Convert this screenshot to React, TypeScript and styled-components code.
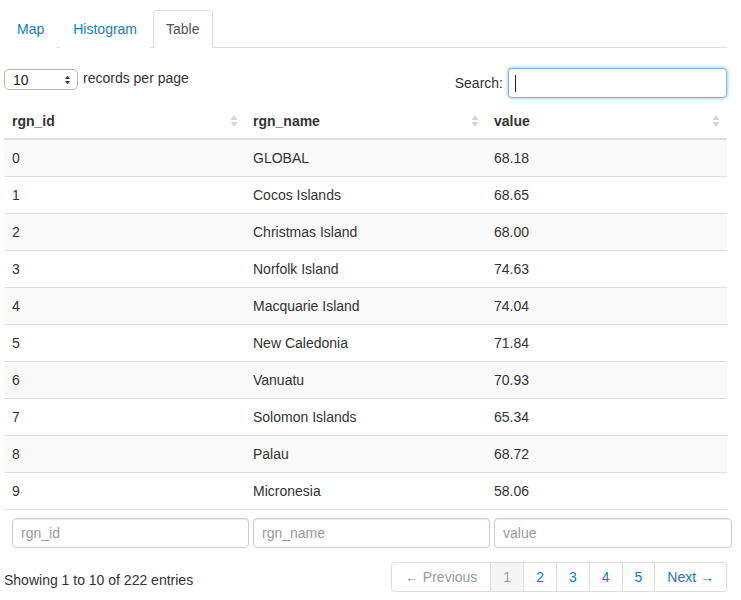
import React from "react";
import styled, { createGlobalStyle } from "styled-components";

const GlobalStyle = createGlobalStyle`
  html, body { margin: 0; padding: 0; background: #fff; }
  body {
    font-family: "Liberation Sans", Helvetica, Arial, sans-serif;
    font-size: 14px;
    line-height: 20px;
    color: #333;
  }
  * { box-sizing: border-box; }
`;

const Page = styled.div`
  width: 723px;
  margin-left: 4px;
  padding-top: 10px;
`;

const Tabs = styled.ul`
  display: flex;
  list-style: none;
  margin: 0 0 20px 0;
  padding: 0;
  border-bottom: 1px solid #ddd;
`;

const Tab = styled.li<{ $active?: boolean }>`
  margin: 0 3px -1px 0;
  padding: 8px 12px;
  line-height: 20px;
  border: 1px solid ${(p) => (p.$active ? "#ddd" : "transparent")};
  border-bottom-color: ${(p) => (p.$active ? "#fff" : "transparent")};
  border-radius: 4px 4px 0 0;
  background: #fff;
  color: ${(p) => (p.$active ? "#555" : "#0a7fcc")};
  cursor: pointer;
`;

const Controls = styled.div`
  display: flex;
  justify-content: space-between;
  align-items: flex-start;
  margin-bottom: 4px;
`;

const LengthGroup = styled.div`
  display: flex;
  align-items: flex-start;
  gap: 5px;
`;

const FakeSelect = styled.div`
  display: flex;
  align-items: center;
  justify-content: space-between;
  width: 74px;
  height: 21px;
  margin-top: 1px;
  padding: 0 6px 0 8px;
  border: 1px solid #b5b5b5;
  border-radius: 5px;
  background: #fff;
  font-size: 14px;
  color: #222;
`;

const SearchGroup = styled.div`
  display: flex;
  align-items: center;
  gap: 5px;
`;

const SearchBox = styled.div`
  display: flex;
  align-items: center;
  width: 219px;
  height: 30px;
  padding: 0 6px;
  border: 1px solid #7fb4e8;
  border-radius: 4px;
  box-shadow: 0 0 3px 1px rgba(110, 170, 235, 0.55);
  background: #fff;
`;

const Caret = styled.span`
  width: 1px;
  height: 17px;
  background: #222;
`;

const Table = styled.table`
  width: 100%;
  border-collapse: collapse;
  table-layout: fixed;
`;

const Th = styled.th`
  padding: 9px 7px 7px 8px;
  text-align: left;
  font-weight: bold;
  border-bottom: 2px solid #ddd;
  line-height: 20px;
`;

const HeadInner = styled.div`
  display: flex;
  align-items: center;
  justify-content: space-between;
`;

const Row = styled.tr<{ $striped: boolean }>`
  background: ${(p) => (p.$striped ? "#f9f9f9" : "#fff")};
`;

const Td = styled.td`
  padding: 8px;
  line-height: 20px;
  border-bottom: 1px solid #ddd;
`;

const FilterRow = styled.div`
  display: grid;
  grid-template-columns: 237px 237px 238px;
  column-gap: 4px;
  padding: 8px 0 8px 8px;
  width: 732px;
`;

const FilterInput = styled.input`
  height: 30px;
  width: 100%;
  padding: 4px 8px;
  font-family: inherit;
  font-size: 14px;
  color: #555;
  border: 1px solid #ccc;
  border-radius: 4px;
  box-shadow: inset 0 1px 1px rgba(0, 0, 0, 0.075);
  outline: none;
  &::placeholder { color: #999; }
`;

const Bottom = styled.div`
  display: flex;
  justify-content: space-between;
  align-items: flex-start;
  margin-top: 6px;
`;

const Info = styled.div`
  padding-top: 8px;
`;

const Pagination = styled.ul`
  display: flex;
  list-style: none;
  margin: 0;
  padding: 0;
  border-radius: 4px;
  box-shadow: 0 1px 2px rgba(0, 0, 0, 0.05);
`;

const PageItem = styled.li<{ $active?: boolean; $disabled?: boolean }>`
  padding: 4px 12px;
  line-height: 20px;
  border: 1px solid #ddd;
  border-left-width: 0;
  background: ${(p) => (p.$active ? "#f5f5f5" : "#fff")};
  color: ${(p) => (p.$active || p.$disabled ? "#999" : "#0a7fcc")};
  &:first-child {
    border-left-width: 1px;
    border-radius: 4px 0 0 4px;
    padding: 4px 13px;
  }
  &:last-child {
    border-radius: 0 4px 4px 0;
  }
`;

const SortIcon = () => (
  <svg width="8" height="14" viewBox="0 0 8 14">
    <polygon points="0.5,6 4,1 7.5,6" fill="#d6d6d6" />
    <polygon points="0.5,8 7.5,8 4,13" fill="#d6d6d6" />
  </svg>
);

const SelectArrows = () => (
  <svg width="7" height="10" viewBox="0 0 7 10">
    <polygon points="1,4 3.5,0.5 6,4" fill="#444" />
    <polygon points="1,6 6,6 3.5,9.5" fill="#444" />
  </svg>
);

const rows: [string, string, string][] = [
  ["0", "GLOBAL", "68.18"],
  ["1", "Cocos Islands", "68.65"],
  ["2", "Christmas Island", "68.00"],
  ["3", "Norfolk Island", "74.63"],
  ["4", "Macquarie Island", "74.04"],
  ["5", "New Caledonia", "71.84"],
  ["6", "Vanuatu", "70.93"],
  ["7", "Solomon Islands", "65.34"],
  ["8", "Palau", "68.72"],
  ["9", "Micronesia", "58.06"],
];

const columns = ["rgn_id", "rgn_name", "value"];

export default function App() {
  return (
    <>
      <GlobalStyle />
      <Page>
        <Tabs>
          <Tab>Map</Tab>
          <Tab>Histogram</Tab>
          <Tab $active>Table</Tab>
        </Tabs>
        <Controls>
          <LengthGroup>
            <FakeSelect>
              <span>10</span>
              <SelectArrows />
            </FakeSelect>
            <span>records per page</span>
          </LengthGroup>
          <SearchGroup>
            <span>Search:</span>
            <SearchBox>
              <Caret />
            </SearchBox>
          </SearchGroup>
        </Controls>
        <Table>
          <thead>
            <tr>
              {columns.map((c) => (
                <Th key={c}>
                  <HeadInner>
                    <span>{c}</span>
                    <SortIcon />
                  </HeadInner>
                </Th>
              ))}
            </tr>
          </thead>
          <tbody>
            {rows.map((r, i) => (
              <Row key={r[0]} $striped={i % 2 === 0}>
                {r.map((v, j) => (
                  <Td key={j}>{v}</Td>
                ))}
              </Row>
            ))}
          </tbody>
        </Table>
        <FilterRow>
          {columns.map((c) => (
            <FilterInput key={c} placeholder={c} />
          ))}
        </FilterRow>
        <Bottom>
          <Info>Showing 1 to 10 of 222 entries</Info>
          <Pagination>
            <PageItem $disabled>← Previous</PageItem>
            <PageItem $active>1</PageItem>
            <PageItem>2</PageItem>
            <PageItem>3</PageItem>
            <PageItem>4</PageItem>
            <PageItem>5</PageItem>
            <PageItem>Next →</PageItem>
          </Pagination>
        </Bottom>
      </Page>
    </>
  );
}
